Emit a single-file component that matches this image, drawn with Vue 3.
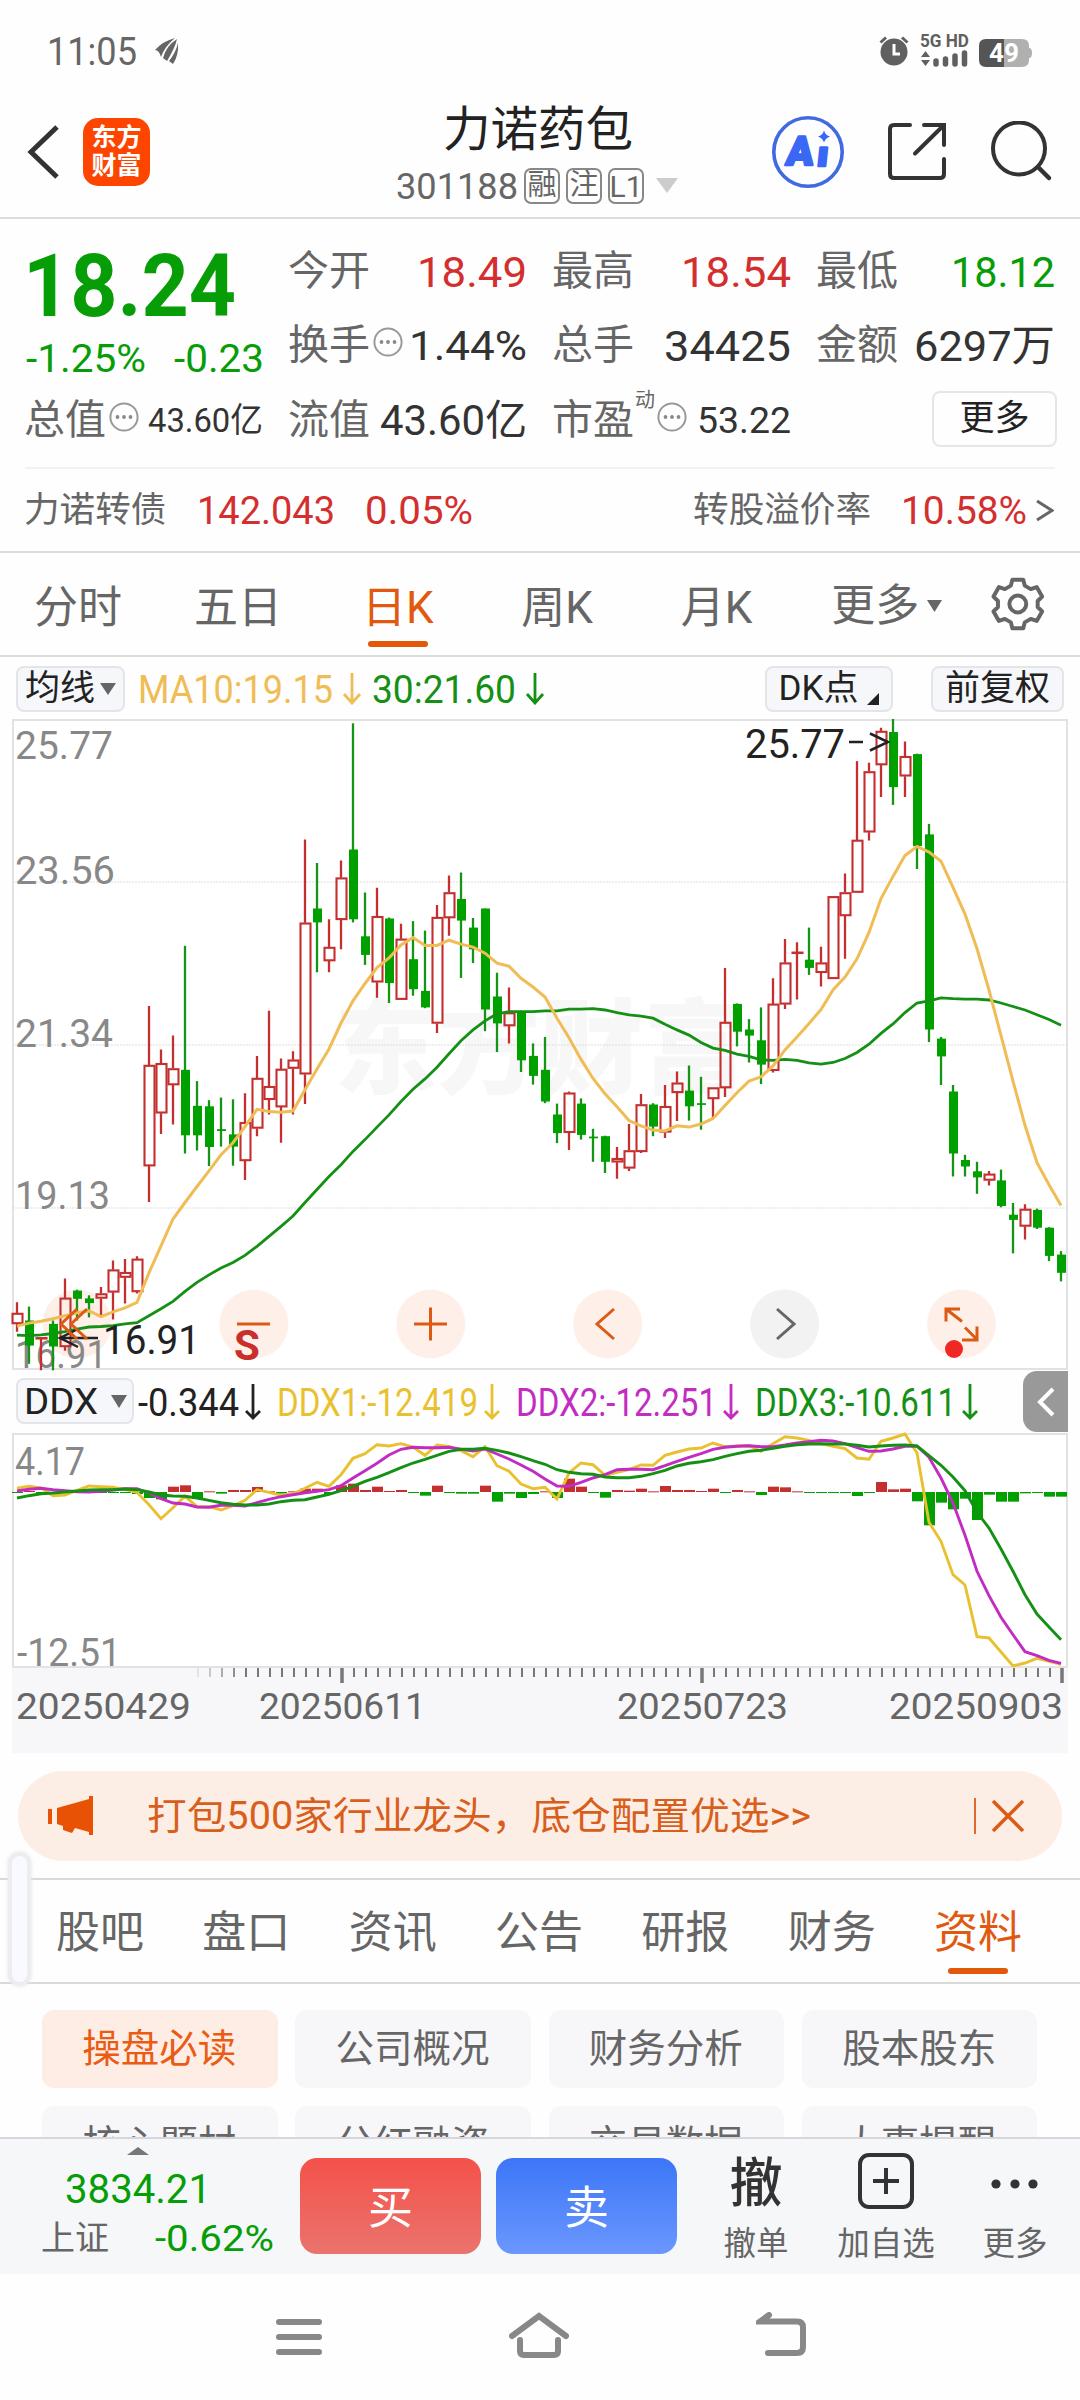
<script setup>
import { h } from 'vue'

// Single line of text stretched to an exact width; its box is the cap height.
const Fit = (p) => {
  const s = +p.s
  const cap = Math.round(s * 0.711)
  return h('svg', { width: p.w, height: cap, style: 'overflow:visible;display:block;flex:none' }, [
    h('text', {
      x: 0, y: cap, 'font-size': s, textLength: p.w, lengthAdjust: 'spacingAndGlyphs',
      fill: 'currentColor', 'font-weight': p.b || 400,
    }, p.t),
  ])
}
Fit.props = ['t', 'w', 's', 'b']

const Dots = () => h('svg', { width: 30, height: 30, viewBox: '0 0 30 30', style: 'display:block;flex:none;position:relative;top:-3px' }, [
  h('circle', { cx: 15, cy: 15, r: 13.6, fill: 'none', stroke: '#999', 'stroke-width': 2 }),
  ...[8.5, 15, 21.5].map((x) => h('circle', { cx: x, cy: 15, r: 1.9, fill: '#888' })),
])

const R = 1, G = 0
// kind, high, body top, body bottom, low
const candles = [
  [R,1390,1415,1440,1458],[G,1400,1432,1490,1532],[R,1472,1471,1473,1547],[G,1432,1440,1492,1547],[R,1335,1380,1493,1502],
  [G,1361,1363,1382,1432],[G,1374,1381,1392,1425],[R,1355,1370,1381,1422],[R,1294,1315,1367,1430],[R,1290,1321,1333,1393],
  [R,1284,1290,1366,1370],[R,707,843,1076,1159],[R,807,839,954,1002],[R,775,851,889,980],[G,568,854,1005,1047],
  [G,880,937,1005,1040],[G,924,938,1032,1076],[G,918,991,995,1031],[G,922,1003,1031,1075],[R,908,975,1064,1108],
  [R,822,873,989,1007],[R,718,892,923,957],[R,828,852,940,1022],[R,811,831,851,957],[R,323,515,864,933],
  [G,377,482,514,629],[R,507,571,603,629],[R,371,411,508,576],[G,55,346,507,514],[G,445,546,589,612],
  [R,434,500,652,688],[G,503,505,654,700],[R,517,552,692,692],[G,511,599,668,683],[G,533,672,710,712],
  [R,474,502,747,769],[R,406,445,504,545],[G,399,460,510,642],[G,504,526,576,608],[G,482,482,715,765],
  [G,630,685,747,813],[R,664,722,753,793],[G,718,720,832,859],[G,793,822,868,888],[G,778,854,927,931],
  [G,932,957,1000,1023],[R,904,907,999,1039],[G,920,932,1004,1015],[G,990,1008,1012,1066],[G,1006,1007,1066,1092],
  [R,1032,1058,1067,1105],[R,979,1040,1081,1087],[R,910,934,1043,1046],[G,931,934,985,1007],[R,889,938,998,1011],
  [R,858,884,907,972],[G,844,902,938,971],[G,870,931,935,992],[R,895,895,921,967],[R,619,744,896,917],
  [G,701,702,766,800],[G,737,761,775,837],[G,710,786,842,887],[R,643,702,856,860],[R,552,607,703,714],
  [R,560,582,584,692],[G,526,600,619,635],[R,570,607,630,662],[R,454,454,644,644],[R,401,445,499,598],
  [R,142,324,445,445],[R,146,166,306,325],[R,65,73,151,225],[G,45,75,202,243],[R,97,131,177,225],
  [G,125,126,338,391],[G,287,311,761,790],[G,778,782,823,889],[G,889,904,1047,1100],[G,1050,1062,1077,1100],
  [G,1066,1088,1102,1140],[R,1087,1094,1109,1121],[G,1084,1109,1168,1171],[G,1161,1188,1200,1277],[R,1164,1175,1215,1245],
  [G,1174,1177,1218,1221],[G,1217,1218,1283,1295],[G,1272,1280,1322,1342],
]
const ma10 = [1445,1438,1434,1428,1421,1414,1410,1423,1412,1403,1390,1322,1260,1198,1160,1123,1087,1050,1022,985,945,950,952,949,900,852,806,746,695,655,618,596,566,549,567,567,555,564,571,585,608,615,643,663,686,735,780,830,874,909,939,971,983,993,995,983,986,979,966,936,907,880,870,845,808,778,747,715,670,640,598,537,459,408,360,339,352,373,433,495,575,670,775,880,982,1068,1119,1167]
const ma30 = [1466,1467,1465,1462,1458,1452,1447,1446,1444,1440,1437,1421,1405,1388,1365,1344,1327,1311,1298,1282,1261,1238,1215,1191,1160,1130,1100,1073,1042,1015,986,958,927,899,875,848,817,787,762,741,725,720,720,720,718,718,714,714,713,716,722,727,730,735,749,762,774,791,804,809,818,823,831,832,830,832,838,841,837,828,814,795,770,748,722,700,695,688,690,691,691,693,700,708,716,727,738,751]
const ddx1 = [356,350,355,378,376,362,349,351,353,360,368,405,447,414,380,411,411,421,408,392,360,368,377,372,356,338,350,315,266,252,225,229,222,232,257,226,230,243,261,231,288,305,343,357,353,388,310,280,285,317,308,300,286,287,257,247,238,235,220,231,229,228,245,222,201,205,212,222,230,237,265,269,215,205,193,250,458,515,615,646,801,805,847,889,880,866,875,884]
const ddx2 = [364,359,356,360,363,366,367,365,361,357,357,370,387,400,403,412,413,407,407,409,399,389,381,375,369,365,360,348,325,303,281,256,239,233,234,234,233,239,244,238,253,268,286,305,328,349,350,338,325,315,300,299,299,300,288,275,263,252,239,233,230,228,231,231,226,220,216,212,214,222,234,245,244,238,230,230,263,325,400,497,605,678,743,795,846,858,872,881]
const ddx3 = [385,378,372,370,367,364,361,360,360,358,360,367,376,379,380,385,392,399,404,406,406,403,396,392,390,382,374,363,350,335,323,309,294,280,269,257,245,239,239,236,242,250,261,273,284,300,308,312,314,322,324,324,320,312,302,289,281,276,270,260,252,245,242,236,230,225,223,222,223,223,227,232,229,227,226,229,258,287,322,363,428,475,538,605,675,733,772,810]
const bars = [-2,3,-2,-2,-2,-2,-2,-2,-3,-3,-6,-18,-22,16,20,-20,2,-5,6,6,15,2,-5,2,10,10,-6,20,25,6,16,3,6,-2,-11,19,-2,-5,-5,19,-29,-5,-18,-6,2,-18,40,16,-2,-17,6,4,10,2,18,6,6,3,10,-2,6,2,-9,16,14,2,-2,-2,-2,-2,-12,-2,30,8,10,-28,-100,-32,-52,-20,-84,-8,-29,-29,-4,-3,-14,-14]

const px = (i) => 5 + i * 12
const py = (v) => +((v - 45) / 2.306).toFixed(1)
const line = (a, f) => a.map((v, i) => `${px(i)},${f(v)}`).join(' ')
const dy = (v) => +((v - 190) / 3).toFixed(1)
const ticks = Array.from({ length: 73 }, (_, k) => ({
  x: 186 + k * 12, major: k % 30 === 12, o: k < 4 ? 0.15 + k * 0.22 : 1,
}))
const priceLabels = [['25.77', 10, 98], ['23.56', 135, 100], ['21.34', 298, 98], ['19.13', 460, 95], ['16.91', 619, 92]]
const periods = [['分时', 35], ['五日', 195], ['日K', 363], ['周K', 520], ['月K', 680]]
const infoTabs = ['股吧', '盘口', '资讯', '公告', '研报', '财务', '资料']
const chips = ['操盘必读', '公司概况', '财务分析', '股本股东', '核心题材', '分红融资', '交易数据', '大事提醒']
const rd = '#c4302f', gr = '#00a000'
</script>

<template>
  <div class="app">
    <div class="status">
      <Fit t="11:05" w="90" s="39" class="time" />
      <svg width="24" height="26" viewBox="0 0 24 26" class="leaf"><path d="M0 12Q8 3 20 0Q10 8 6 19Q4 12 0 12ZM8 20Q11 8 22 1Q20 10 12 23ZM14 23Q21 14 23 5Q24 17 18 26Z" fill="#666" /></svg>
      <span class="grow"></span>
      <svg width="154" height="36" viewBox="0 0 154 36">
        <circle cx="15" cy="20" r="13.5" fill="#606060" /><path d="M15 12v10h6" stroke="#fff" stroke-width="3" fill="none" /><path d="M1.500 10.500l5.500-5M28.500 10.500l-5.500-5" stroke="#606060" stroke-width="3" />
        <text x="41" y="14.500" font-size="18" font-weight="700" fill="#606060" textLength="49" lengthAdjust="spacingAndGlyphs">5G HD</text>
        <path d="M42 25l4.500-6 4.500 6zM42 28l4.500 6 4.500-6z" fill="#606060" />
        <path d="M57 32v-3M66.500 32v-5M76 32v-8M85.500 32v-11" stroke="#606060" stroke-width="5.500" stroke-linecap="round" />
        <path d="M107 7h36q7 0 7 7v2q3 0 3 5t-3 5v2q0 7-7 7h-19v-28z" fill="#b0b0b0" />
        <path d="M107 7h18v28h-18q-7 0-7-7v-14q0-7 7-7z" fill="#555" />
        <text x="110" y="29.500" font-size="25" font-weight="700" fill="#fff" textLength="30" lengthAdjust="spacingAndGlyphs">49</text>
      </svg>
    </div>

    <header class="head">
      <svg width="36" height="60" viewBox="0 0 36 60" class="back"><path d="M33 5L7 30L33 55" fill="none" stroke="#333" stroke-width="5" /></svg>
      <div class="logo"><span>东方</span><span>财富</span></div>
      <div class="title">
        <div class="name">力诺药包</div>
        <div class="code"><Fit t="301188" w="122" s="37" /><i>融</i><i>注</i><i>L1</i>
          <svg width="22" height="15" viewBox="0 0 22 15"><path d="M0 0h22L11 15z" fill="#ccc" /></svg></div>
      </div>
      <svg width="74" height="74" viewBox="0 0 74 74" class="ai">
        <circle cx="37" cy="37" r="34.200" fill="none" stroke="#4169e1" stroke-width="3.600" />
        <g fill="#3a68f5" stroke="#3a68f5" stroke-width="2.500" stroke-linejoin="round" font-weight="900" transform="translate(4.500 0) skewX(-6)">
          <text x="15" y="50" font-size="40" textLength="27" lengthAdjust="spacingAndGlyphs">A</text>
          <text x="46" y="51" font-size="35" textLength="11" lengthAdjust="spacingAndGlyphs">ı</text>
        </g>
        <path d="M53 15.500q1.500 5 6 6q-4.500 1.500-6 6q-1.500-4.500-6-6q4.500-1 6-6z" fill="#3a68f5" />
      </svg>
      <svg width="60" height="60" viewBox="0 0 60 60" class="share"><path d="M23 3H7Q3 3 3 7V52Q3 56 7 56H53Q57 56 57 52V37M37 3H57V23M56 4L28 31.500" fill="none" stroke="#333" stroke-width="4" stroke-linecap="round" /></svg>
      <svg width="62" height="62" viewBox="0 0 62 62"><circle cx="28" cy="27.500" r="26" fill="none" stroke="#333" stroke-width="4" /><path d="M47 46L58 57" stroke="#333" stroke-width="4.500" stroke-linecap="round" /></svg>
    </header>

    <section class="quote">
      <div class="last gr"><Fit t="18.24" w="213" s="88" b="700" />
        <div class="chg"><Fit t="-1.25%" w="120" s="38" /><Fit t="-0.23" w="90" s="38" /></div></div>
      <div class="cell"><span>今开</span><Fit class="rd" t="18.49" w="110" s="43" /></div>
      <div class="cell"><span>最高</span><Fit class="rd" t="18.54" w="110" s="43" /></div>
      <div class="cell"><span>最低</span><Fit class="gr" t="18.12" w="104" s="43" /></div>
      <div class="cell"><span>换手</span><Dots /><Fit class="dk end" t="1.44%" w="118" s="41" /></div>
      <div class="cell"><span>总手</span><Fit class="dk" t="34425" w="127" s="43" /></div>
      <div class="cell"><span>金额</span><Fit class="dk" t="6297万" w="141" s="43" /></div>
      <div class="cell"><span>总值</span><Dots /><Fit class="dk end" t="43.60亿" w="115" s="34" /></div>
      <div class="cell"><span>流值</span><Fit class="dk" t="43.60亿" w="147" s="42" /></div>
      <div class="cell"><span>市盈</span><sup>动</sup><Dots /><Fit class="dk end" t="53.22" w="94" s="37" /></div>
      <div class="cell"><b class="more">更多</b></div>
    </section>
    <div class="bond">
      <span>力诺转债</span><Fit class="rd b1" t="142.043" w="138" s="38" /><Fit class="rd b2" t="0.05%" w="108" s="38" />
      <span class="grow"></span><span>转股溢价率</span><Fit class="rd b3" t="10.58%" w="126" s="38" />
      <svg class="b4" width="18" height="24" viewBox="0 0 18 24"><path d="M1 2l15 9.500L1 21" fill="none" stroke="#666" stroke-width="3" /></svg>
    </div>

    <nav class="periods">
      <span v-for="(p, i) in periods" :key="p[0]" :class="{ on: i === 2 }">{{ p[0] }}</span>
      <span class="pm">更多<svg width="15" height="12" viewBox="0 0 15 12"><path d="M0 0h15L7.500 12z" fill="#666" /></svg></span>
      <svg width="54" height="54" viewBox="0 0 54 54" class="gear"><path d="M21.500 2.500h11l1.500 6 6 3.500 6-2 5.500 9.500-4.500 4.500v6l4.500 4.500-5.500 9.500-6-2-6 3.500-1.500 6h-11l-1.500-6-6-3.500-6 2-5.500-9.500 4.500-4.500v-6l-4.500-4.500 5.500-9.500 6 2 6-3.500z" fill="none" stroke="#666" stroke-width="4" stroke-linejoin="round" /><circle cx="27" cy="27" r="8.500" fill="none" stroke="#666" stroke-width="4" /></svg>
    </nav>

    <section class="chart">
      <div class="legend">
        <div class="btn w1">均线<svg width="16" height="12" viewBox="0 0 16 12"><path d="M0 0h16L8 12z" fill="#666" /></svg></div>
        <Fit class="ye g1" t="MA10:19.15" w="195" s="38" />
        <svg class="ye arr" width="20" height="32" viewBox="0 0 20 32"><path d="M10 0v29M2 21l8 9 8-9" /></svg>
        <Fit class="dg g2" t="30:21.60" w="144" s="38" />
        <svg class="dg arr" width="20" height="32" viewBox="0 0 20 32"><path d="M10 0v29M2 21l8 9 8-9" /></svg>
        <span class="grow"></span>
        <div class="btn w2">DK点<svg width="12" height="12" viewBox="0 0 12 12"><path d="M12 0v12H0z" fill="#222" /></svg></div>
        <div class="btn w3">前复权</div>
      </div>

      <svg class="plot" width="1056" height="651" viewBox="0 0 1056 651">
        <rect x="1" y="1" width="1054" height="649" fill="#fff" stroke="#e2e2e4" stroke-width="2" />
        <text class="wm" x="322" y="367" textLength="412">东方财富</text>
        <path d="M0 163H1056M0 326H1056M0 489H1056" stroke="#ddd" stroke-dasharray="2 1" fill="none" />
        <circle v-for="k in 6" :key="k" :cx="65 + (k - 1) * 176.900" cy="605" r="34.500" :fill="k === 5 ? '#f2f2f2' : '#fef0e9'" />
        <g class="lab"><text v-for="l in priceLabels" :key="l[0]" x="3" :y="l[1] + 30" :textLength="l[2]" lengthAdjust="spacingAndGlyphs">{{ l[0] }}</text></g>
        <g v-for="(c, i) in candles" :key="i">
          <template v-if="c[0]">
            <path :d="`M${px(i)} ${py(c[1])}V${py(c[2])}M${px(i)} ${py(c[3])}V${py(c[4])}`" :stroke="rd" stroke-width="2.300" />
            <rect :x="px(i) - 4.500" :y="py(c[2]) + 0.700" width="10" :height="Math.max(0.4, py(c[3]) - py(c[2]) - 1.400)" fill="none" :stroke="rd" stroke-width="2.100" />
          </template>
          <template v-else>
            <path :d="`M${px(i)} ${py(c[1])}V${py(c[4])}`" stroke="#159515" stroke-width="2.300" />
            <rect :x="px(i) - 4" :y="py(c[2])" width="9" :height="py(c[3]) - py(c[2])" :fill="gr" />
          </template>
        </g>
        <polyline :points="line(ma30, py)" fill="none" stroke="#149014" stroke-width="2.800" />
        <polyline :points="line(ma10, py)" fill="none" stroke="#f0bc55" stroke-width="3" />
        <g class="mark">
          <text x="733" y="38.500" textLength="100" lengthAdjust="spacingAndGlyphs">25.77</text>
          <text x="91" y="635" textLength="97" lengthAdjust="spacingAndGlyphs">16.91</text>
          <path d="M837 23h14M858 14.500l18 8.500-18 8.500M86 619H49M66 610l-18 9 18 9" fill="none" stroke="#222" stroke-width="2.500" />
        </g>
        <path d="M65 590L49 605 65 620M75 590L59 605 75 620M225 605h33M402 605h33M418.500 588.500v33M602 590L585 605 602 620M950 602.500L934 590M934 602.500V590h14M953 608.500l12 12M965 607.500v13.500h-15" fill="none" stroke="#db5a14" stroke-width="3" />
        <path d="M765 590L782 605 765 620" fill="none" stroke="#666" stroke-width="3" />
        <text x="222" y="641" font-size="42" font-weight="700" fill="#c9302c">S</text>
        <circle cx="942" cy="630" r="9" fill="#f02824" />
      </svg>

      <div class="legend second">
        <div class="btn w4"><Fit t="DDX" w="74" s="37" /><svg width="16" height="13" viewBox="0 0 16 13"><path d="M0 0h16L8 13z" fill="#666" /></svg></div>
        <Fit class="bk" t="-0.344" w="101" s="39" />
        <svg class="bk arr" width="18" height="36" viewBox="0 0 18 36"><path d="M9 0v34M2 27l7 7 7-7" /></svg>
        <Fit class="yy d" t="DDX1:-12.419" w="201" s="39" />
        <svg class="yy arr" width="18" height="36" viewBox="0 0 18 36"><path d="M9 0v34M2 27l7 7 7-7" /></svg>
        <Fit class="mg d" t="DDX2:-12.251" w="201" s="39" />
        <svg class="mg arr" width="18" height="36" viewBox="0 0 18 36"><path d="M9 0v34M2 27l7 7 7-7" /></svg>
        <Fit class="dg d" t="DDX3:-10.611" w="201" s="39" />
        <svg class="dg arr" width="18" height="36" viewBox="0 0 18 36"><path d="M9 0v34M2 27l7 7 7-7" /></svg>
        <span class="grow"></span>
        <div class="fold"><svg width="18" height="30" viewBox="0 0 18 30"><path d="M16 2L3 15l13 13" fill="none" stroke="#fff" stroke-width="4" /></svg></div>
      </div>

      <svg class="plot" width="1056" height="235" viewBox="0 0 1056 235">
        <rect x="1" y="1" width="1054" height="233" fill="#fff" stroke="#e2e2e4" stroke-width="2" />
        <g class="lab"><text x="3" y="42" textLength="70" lengthAdjust="spacingAndGlyphs">4.17</text><text x="5" y="233" textLength="104" lengthAdjust="spacingAndGlyphs">-12.51</text></g>
        <rect v-for="(b, i) in bars" :key="i" :x="px(i) - 5" :y="b > 0 ? 59 - b / 3 : 59" width="11" :height="Math.max(1, Math.abs(b) / 3)" :fill="b > 0 ? rd : gr" />
        <polyline :points="line(ddx1, dy)" fill="none" stroke="#e9c130" stroke-width="2.900" />
        <polyline :points="line(ddx2, dy)" fill="none" stroke="#c22cc2" stroke-width="2.900" />
        <polyline :points="line(ddx3, dy)" fill="none" stroke="#149014" stroke-width="2.900" />
      </svg>
      <svg class="axis" width="1056" height="85" viewBox="0 0 1056 85">
        <path v-for="t in ticks" :key="t.x" :d="`M${t.x} 0v${t.major ? 15 : 9}`" stroke="#777" :stroke-width="t.major ? 3.500 : 2" :opacity="t.o" />
        <g font-size="37.500" fill="#666">
          <text x="4" y="51" textLength="175" lengthAdjust="spacingAndGlyphs">20250429</text>
          <text x="247" y="51" textLength="167" lengthAdjust="spacingAndGlyphs">20250611</text>
          <text x="605" y="51" textLength="171" lengthAdjust="spacingAndGlyphs">20250723</text>
          <text x="877" y="51" textLength="174" lengthAdjust="spacingAndGlyphs">20250903</text>
        </g>
      </svg>
    </section>

    <div class="banner">
      <svg width="46" height="40" viewBox="0 0 46 40"><path d="M0 13h4v15H0zM9 12L41 3V0h4v39h-4v-3l-14-4-3 5-9-3v-4l-6-2z" fill="#e85205" /></svg>
      <Fit t="打包500家行业龙头，底仓配置优选>>" w="664" s="38" />
      <span class="grow"></span><span class="bar"></span>
      <svg width="34" height="34" viewBox="0 0 34 34"><path d="M2 2l30 30M32 2L2 32" stroke="#dd5a14" stroke-width="3.500" /></svg>
    </div>

    <nav class="info">
      <span v-for="(t, i) in infoTabs" :key="t" :class="{ on: i === 6 }">{{ t }}</span>
      <span class="handle"></span>
    </nav>
    <div class="chips">
      <span v-for="(c, i) in chips" :key="c" :class="{ on: i === 0 }">{{ c }}</span>
    </div>

    <footer class="trade">
      <div class="index">
        <svg width="22" height="8" viewBox="0 0 22 8"><path d="M0 8L11 0l11 8z" fill="#777" /></svg>
        <Fit class="gr i1" t="3834.21" w="146" s="41" />
        <div class="i2"><span>上证</span><Fit class="gr" t="-0.62%" w="119" s="37" /></div>
      </div>
      <div class="tb buy">买</div>
      <div class="tb sell">卖</div>
      <div class="act a1"><b>撤</b><span>撤单</span></div>
      <div class="act a2"><svg width="56" height="56" viewBox="0 0 56 56"><rect x="2" y="2" width="52" height="52" rx="9" fill="none" stroke="#333" stroke-width="4" /><path d="M28 15v26M15 28h26" stroke="#333" stroke-width="4" /></svg><span>加自选</span></div>
      <div class="act a3"><svg width="48" height="56" viewBox="0 0 48 56"><circle cx="5" cy="31" r="4.600" /><circle cx="24" cy="31" r="4.600" /><circle cx="42" cy="31" r="4.600" /></svg><span>更多</span></div>
    </footer>
    <div class="sys">
      <svg width="46" height="38" viewBox="0 0 46 38"><path d="M3 4h40M3 19h40M3 34h40" /></svg>
      <svg width="60" height="46" viewBox="0 0 60 46"><path d="M3 24L30 4l27 20" /><path d="M11 28v11q0 4 4 4h30q4 0 4-4V28" /></svg>
      <svg width="50" height="44" viewBox="0 0 50 44"><path d="M13 3L4 9.500H41q6 0 6 6V35q0 6-6 6H12" /></svg>
    </div>
  </div>
</template>

<style>
body { background: #fefefe; }
</style>
<style scoped>
.app { width: 1080px; height: 2400px; overflow: hidden; display: flex; flex-direction: column; background: #fefefe; color: #666; font-family: Roboto, "Noto Sans CJK SC", sans-serif; }
.app > * { flex: none; box-sizing: border-box; }
.app span, .app b, .app i { white-space: nowrap; }
.grow { flex: 1; }
.rd { color: #d42f2f; } .gr { color: #069d06; } .dk { color: #333; } .ye { color: #f0bc55; } .dg { color: #149014; }
.bk { color: #222; } .yy { color: #e9c130; } .mg { color: #c22cc2; }
.status { height: 86px; display: flex; align-items: flex-start; padding: 0 47px 0 47px; }
.status svg, .plot { overflow: visible; }
.time { margin-top: 37px; }
.leaf { margin: 38px 0 0 18px; }
.status > svg:last-child { margin-top: 32px; }
.head { height: 133px; border-bottom: 2px solid #dcdcdc; display: flex; align-items: center; padding-right: 27px; }
.back { margin-left: 24px; }
.logo { width: 67px; height: 68px; margin-left: 23px; border-radius: 15px; background: #fd4500; color: #fff; font-size: 25px; font-weight: 700; line-height: 28px; display: flex; flex-direction: column; align-items: center; justify-content: center; }
.title { flex: 1; display: flex; flex-direction: column; margin-left: 246px; padding-top: 5px; }
.name { font-size: 47.500px; line-height: 50px; color: #222; margin-left: 47px; }
.code { display: flex; align-items: center; margin-top: 13px; }
.code i { font-style: normal; box-sizing: border-box; width: 36px; height: 36px; border: 2px solid #888; border-radius: 7px; font-size: 29px; line-height: 31px; display: flex; justify-content: center; margin-left: 6px; }
.code i:last-of-type { font-size: 30px; line-height: 33px; }
.code svg:last-child { margin-left: 12px; }
.share { margin: 0 44px 0 42px; }
.quote { height: 250px; margin: 0 25px; padding: 15px 0 0; border-bottom: 2px solid #f2f2f4; display: grid; grid-template-columns: repeat(4, 238px); column-gap: 26px; grid-template-rows: 74px 74px 75px; }
.quote .cell, .bond { position: relative; }
.last { grid-row: span 2; padding-top: 19px; }
.last > svg { margin-left: -2px; }
.chg { display: flex; justify-content: space-between; margin: 29px -1px 0 1px; }
.cell { display: flex; align-items: center; justify-content: space-between; font-size: 41px; line-height: 1; }
.cell > span { margin-left: -1px; padding-top: 1px; }
.cell .end { margin-left: auto; }
.cell span + svg { margin-left: 3px; }
.cell sup { font-size: 20px; align-self: flex-start; margin: 8px 2px 0 1px; line-height: 20px; }
.more { width: 125px; height: 56px; box-sizing: border-box; border: 2px solid #e6e6e6; border-radius: 8px; margin: 0 -2px 2px auto; font-size: 35px; font-weight: 400; color: #222; display: flex; align-items: center; justify-content: center; }
.bond { height: 84px; border-bottom: 2px solid #dcdcdc; padding: 1px 26px 0 24px; display: flex; align-items: center; font-size: 35.600px; line-height: 1; }
.b1 { margin-left: 31px; } .b2 { margin-left: 30px; } .b3 { margin-left: 30px; } .b4 { margin-left: 9px; }
.periods { height: 104px; border-bottom: 2px solid #dcdcdc; display: flex; font-size: 44px; line-height: 102px; padding: 4px 35px 0 34px; box-sizing: border-box; }
.periods span { position: relative; width: 88px; margin-right: 72px; display: flex; justify-content: center; }
.periods .pm { width: 112px; margin: 0 49px 0 -1px; gap: 8px; justify-content: flex-start; align-items: center; }
.gear { margin-top: 20px; }
.on { color: #e1590f; }
.periods .on::after, .info .on::after { content: ""; position: absolute; bottom: 8px; left: 50%; margin-left: -30px; width: 60px; height: 6px; border-radius: 3px; background: #e3570b; }
.chart { padding: 0 12px; background: #fefefe; }
.legend { height: 62px; display: flex; align-items: center; padding: 2px 4px 0; box-sizing: border-box; }
.btn { box-sizing: border-box; height: 46px; border: 2px solid #e3e5e9; border-radius: 8px; background: #f6f7fa; color: #222; font-size: 35px; line-height: 42px; display: flex; justify-content: center; white-space: nowrap; align-items: center; margin-bottom: 1px; }
.w1 { width: 109px; gap: 5px; } .w2 { width: 128px; gap: 9px; margin-right: 38px; } .w3 { width: 133px; }
.w2 svg { align-self: flex-end; margin-bottom: 5px; }
.w4 { width: 118px; gap: 13px; margin-right: 4px; }
.g1 { margin-left: 13px; } .g2 { margin-left: 10px; }
.arr { fill: none; stroke: currentColor; stroke-width: 2.800px; flex: none; }
.legend .g1 + .arr, .g2 + .arr { margin-left: 9px; }
.plot { display: block; }
.second { height: 63px; padding: 0 0 0 4px; }
.second .arr { margin-left: 5px; }
.second .d { margin-left: 15px; }
.fold { width: 45px; height: 61px; border-radius: 14px 0 0 14px; background: #999; display: flex; align-items: center; justify-content: center; }
.wm { font-size: 103px; font-weight: 900; fill: #f7f7f7; }
.lab { font-size: 39px; fill: #888; }
.mark text { font-size: 40px; fill: #222; }
.axis { display: block; background: #f7f7fa; }
.banner { height: 90px; margin: 18px 18px 17px; border-radius: 45px; background: #fdeee5; color: #d95e1c; display: flex; align-items: center; padding: 0 37px 0 30px; }
.banner > svg:nth-child(2) { margin-left: 53px; margin-top: -2px; }
.bar { width: 2px; height: 36px; background: #dd6a30; margin-right: 15px; }
.info { position: relative; height: 106px; border-top: 2px solid #dadada; border-bottom: 2px solid #dadada; display: flex; justify-content: space-between; padding: 1px 58px 0 56px; font-size: 44px; line-height: 104px; }
.info span { position: relative; }
.info .handle { position: absolute; left: 8px; top: -28px; width: 23px; height: 134px; border-radius: 12px; box-sizing: border-box; border: 4px solid #ededf0; background: #f9faff; box-shadow: 0 0 4px #e6e6e6; }
.chips { height: 153px; overflow: hidden; padding: 26px 42px 0; display: grid; grid-template-columns: repeat(4, 235.500px); column-gap: 17.800px; row-gap: 18px; grid-template-rows: 78px 78px; font-size: 38.500px; line-height: 78px; text-align: center; }
.chips span { border-radius: 12px; background: #f7f7f9; text-indent: -1px; }
.chips .on { background: #feede5; color: #ea5b14; }
.trade { height: 137px; border-top: 2px solid #d6d6dc; background: #f5f7f9; display: flex; }
.index { width: 258px; margin-left: 42px; display: flex; flex-direction: column; }
.index > svg:first-child { margin: 8px 0 0 85px; }
.i1 { margin: 19px 0 0 23px; }
.i2 { display: flex; justify-content: space-between; align-items: center; width: 232px; font-size: 34px; line-height: 34px; margin-top: 18px; }
.i2 span { margin-left: -1px; }
.tb { width: 181px; height: 96px; margin: 19px 15px 0 0; border-radius: 17px; color: #fff; font-size: 45px; line-height: 101px; text-align: center; }
.buy { background: linear-gradient(#f4514a, #ea746d); }
.sell { background: linear-gradient(#3c76f7, #6b97fe); }
.act { display: flex; flex-direction: column; align-items: center; font-size: 32.500px; line-height: 34px; }
.act b { font-size: 53px; line-height: 63px; font-weight: 500; color: #333; }
.act span { margin-top: 18px; }
.act > :first-child { margin-top: 14px; height: 56px; fill: #333; }
.a1 { margin-left: 31px; width: 66px; } .a2 { margin-left: 48px; width: 98px; } .a3 { margin-left: 47px; width: 66px; }
.sys { height: 125px; position: relative; display: flex; justify-content: center; padding: 38px 0 0 2px; gap: 187px; }
.sys svg { fill: none; stroke: #888; stroke-width: 6px; stroke-linecap: round; }
.sys svg:first-child { margin-top: 6px; }
</style>
